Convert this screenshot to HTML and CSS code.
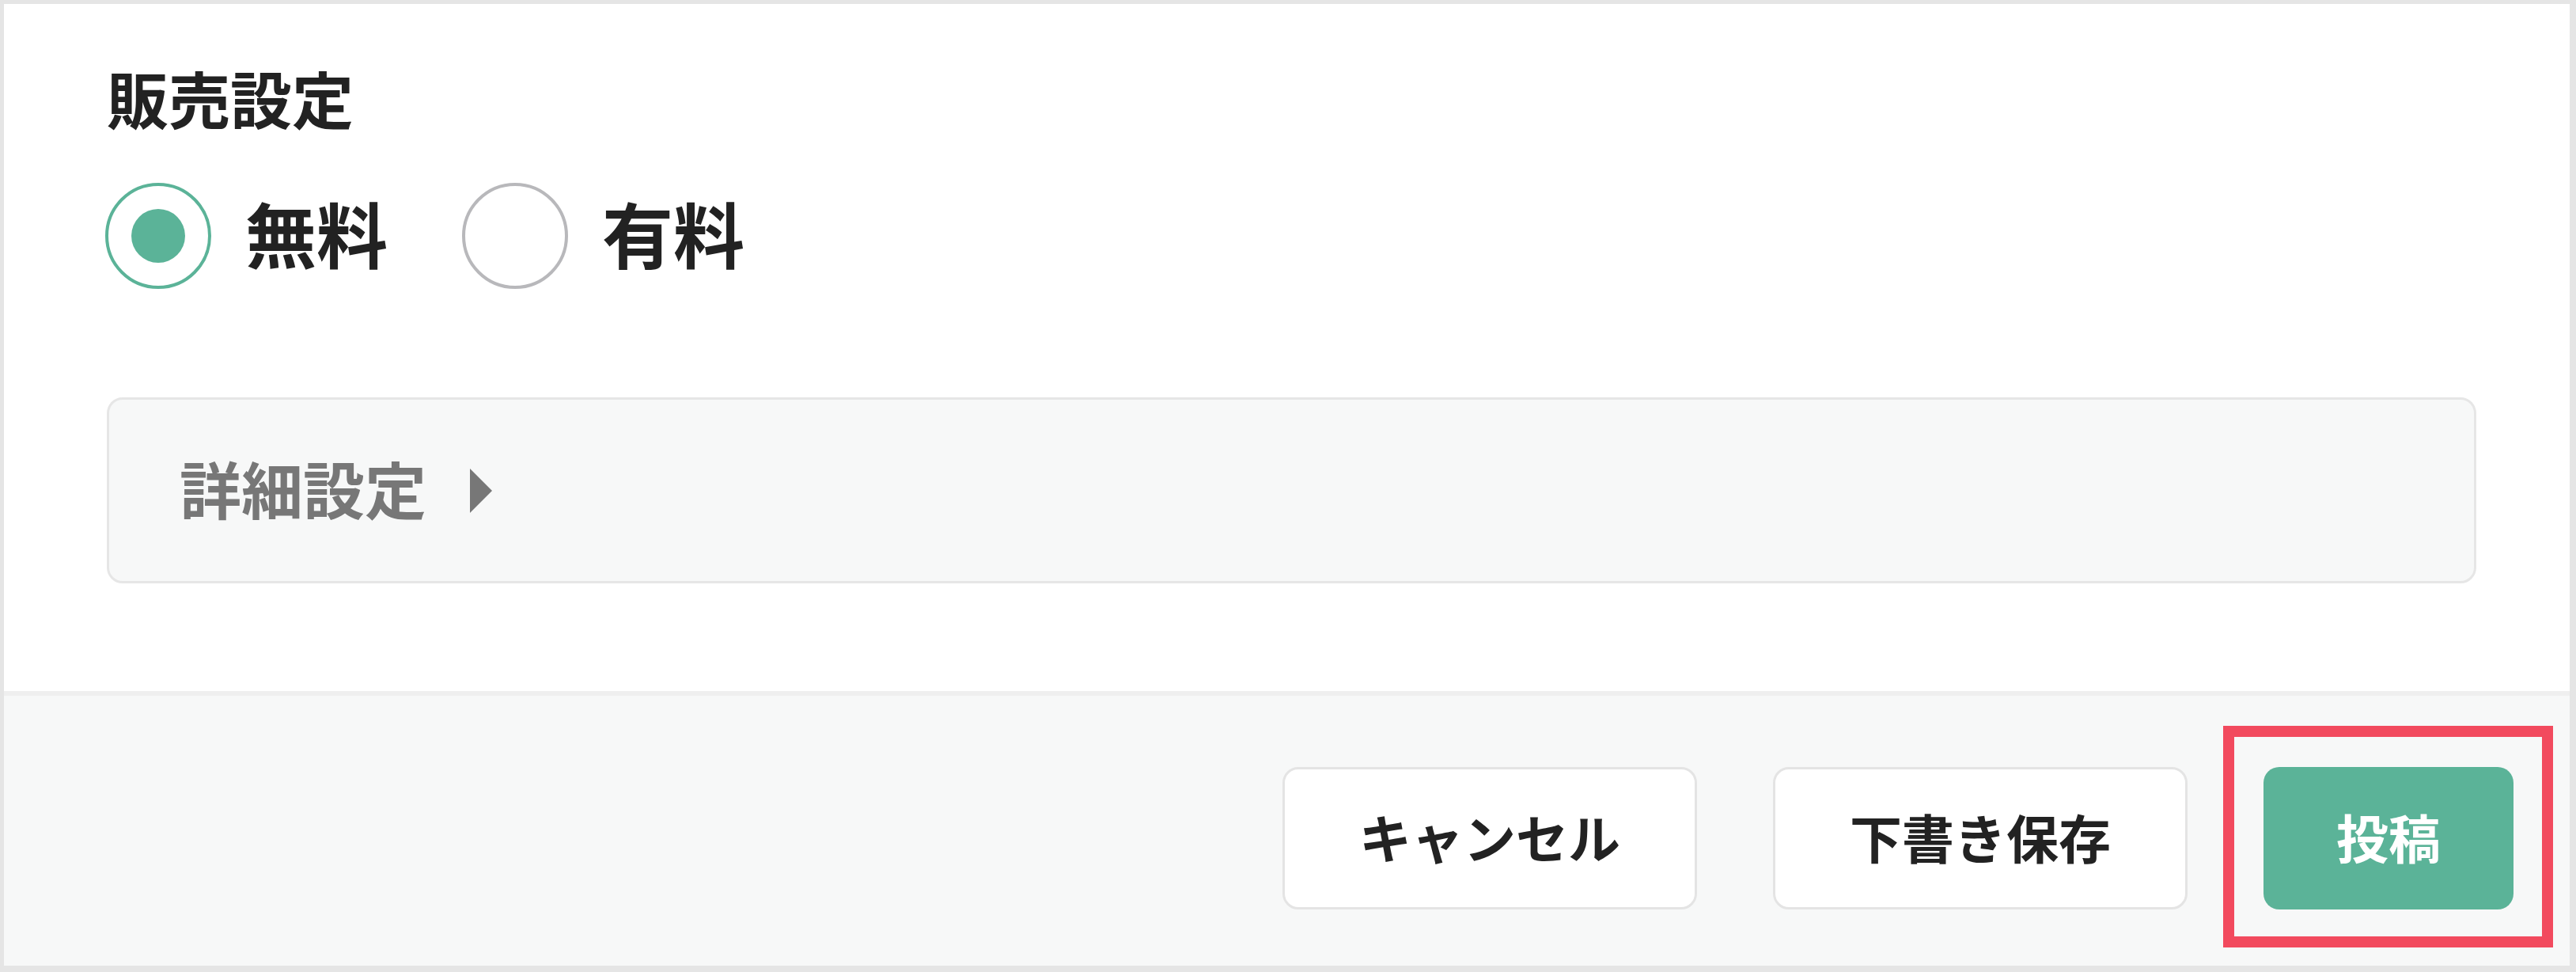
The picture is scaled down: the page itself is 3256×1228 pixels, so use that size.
FILE: index.html
```html
<!DOCTYPE html>
<html lang="ja">
<head>
<meta charset="utf-8">
<title>販売設定</title>
<link rel="stylesheet" href="styles.css">
</head>
<body>
<div class="panel">
  <section class="main">
    <h2 class="heading">販売設定</h2>
    <div class="radios">
      <label class="radio">
        <span class="radio-circle is-checked"><span class="radio-dot"></span></span>
        <span class="radio-label">無料</span>
      </label>
      <label class="radio">
        <span class="radio-circle"></span>
        <span class="radio-label">有料</span>
      </label>
    </div>
    <div class="details">
      <span class="details-label">詳細設定</span>
      <span class="details-arrow"></span>
    </div>
  </section>
  <footer class="footer">
    <button class="btn btn-white">キャンセル</button>
    <button class="btn btn-white">下書き保存</button>
    <div class="highlight-wrap">
      <button class="btn btn-primary">投稿</button>
      <span class="highlight"></span>
    </div>
  </footer>
</div>
</body>
</html>
```

FILE: styles.css
```css
* {
  box-sizing: border-box;
}

html, body {
  margin: 0;
  padding: 0;
}

body {
  background: #e5e5e5;
  font-family: "Noto Sans CJK JP", "Noto Sans", sans-serif;
  color: #222222;
  width: 3256px;
  height: 1228px;
  padding: 5px 8px 8px 5px;
}

.panel {
  display: flex;
  flex-direction: column;
  height: 1215px;
}

.main {
  background: #ffffff;
  padding: 79px 118px 136px 130px;
  height: 868px;
}

.heading {
  margin: 0;
  font-size: 78px;
  line-height: 78px;
  font-weight: 700;
  color: #222222;
}

.radios {
  display: flex;
  align-items: center;
  gap: 94px;
  margin-top: 69px;
  margin-left: -2px;
}

.radio {
  display: flex;
  align-items: center;
  gap: 43px;
}

.radio-circle {
  width: 134px;
  height: 134px;
  border-radius: 50%;
  border: 4px solid #b8b8bb;
  display: flex;
  align-items: center;
  justify-content: center;
  background: #ffffff;
}

.radio-circle.is-checked {
  border-color: #5bb398;
}

.radio-dot {
  width: 68px;
  height: 68px;
  border-radius: 50%;
  background: #5bb398;
}

.radio-label {
  font-size: 90px;
  line-height: 90px;
  font-weight: 700;
  color: #222222;
  position: relative;
  top: -5px;
}

.details {
  margin-top: 137px;
  height: 235px;
  background: #f7f8f8;
  border: 3px solid #e6e6e6;
  border-radius: 20px;
  display: flex;
  align-items: center;
  padding-left: 89px;
}

.details-label {
  font-size: 78px;
  line-height: 78px;
  font-weight: 700;
  color: #777777;
  position: relative;
  top: -4px;
}

.details-arrow {
  width: 0;
  height: 0;
  margin-left: 55px;
  border-left: 28px solid #777777;
  border-top: 28px solid transparent;
  border-bottom: 28px solid transparent;
}

.footer {
  flex: 1;
  background: #f7f8f8;
  border-top: 6px solid #efefef;
  display: flex;
  justify-content: flex-end;
  align-items: flex-start;
  gap: 96px;
  padding: 90px 71px 0 0;
}

.btn {
  font-family: "Noto Sans CJK JP", "Noto Sans", sans-serif;
  font-size: 66px;
  line-height: 66px;
  font-weight: 700;
  height: 180px;
  border-radius: 20px;
  margin: 0;
  cursor: pointer;
}

.btn-white {
  background: #ffffff;
  color: #222222;
  border: 3px solid #e4e4e4;
  padding: 0 94px 6px;
}

.btn-primary {
  background: #5bb398;
  color: #ffffff;
  border: none;
  padding: 0 92px 6px;
}

.highlight-wrap {
  position: relative;
}

.highlight {
  position: absolute;
  top: -52px;
  left: -51px;
  right: -50px;
  bottom: -48px;
  border: 14px solid #f24a5e;
  pointer-events: none;
}
```
